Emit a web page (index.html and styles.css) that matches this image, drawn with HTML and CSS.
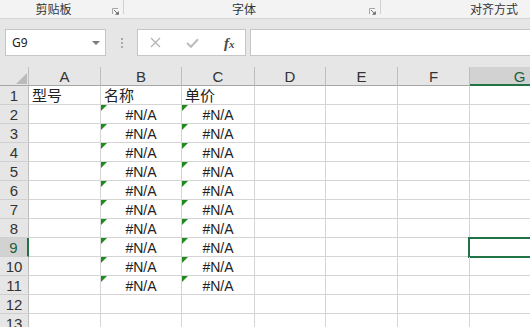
FILE: index.html
```html
<!DOCTYPE html>
<html lang="zh-CN">
<head>
    <meta charset="UTF-8">
    <title>Sheet1</title>
    <link rel="stylesheet" href="styles.css">
</head>
<body>
    <!-- Ribbon group labels -->
    <div class="ribbon">
        <div class="group g-clip">
            <span class="group-label">剪贴板</span>
            <span class="launcher"><svg width="7" height="7" viewBox="0 0 7 7"><path d="M0.5 6V0.5H6" fill="none" stroke="#a6a6a6"/><path d="M2 2L5 5" stroke="#777"/><polygon points="6.8,3 6.8,6.8 3,6.8" fill="#666"/></svg></span>
            <span class="sep"></span>
        </div>
        <div class="group g-font">
            <span class="group-label">字体</span>
            <span class="launcher"><svg width="7" height="7" viewBox="0 0 7 7"><path d="M0.5 6V0.5H6" fill="none" stroke="#a6a6a6"/><path d="M2 2L5 5" stroke="#777"/><polygon points="6.8,3 6.8,6.8 3,6.8" fill="#666"/></svg></span>
            <span class="sep"></span>
        </div>
        <div class="group g-align">
            <span class="group-label">对齐方式</span>
        </div>
    </div>

    <!-- Formula bar -->
    <div class="formula-bar">
        <div class="name-box">
            <span>G9</span>
            <span class="dd"></span>
        </div>
        <div class="grip"><i></i><i></i><i></i></div>
        <div class="fx-buttons">
            <svg width="11" height="11" viewBox="0 0 11 11"><path d="M1 1L10 10M10 1L1 10" stroke="#b3b3b3" stroke-width="1.3"/></svg>
            <svg width="13" height="10" viewBox="0 0 13 10"><path d="M1 5L5 8.8L12 1.2" fill="none" stroke="#bcbcbc" stroke-width="2"/></svg>
            <span class="fx"><i>f</i><i class="x">x</i></span>
        </div>
        <div class="formula-input"></div>
    </div>

    <!-- Worksheet -->
    <div class="sheet">
        <div class="ch corner"></div><div class="ch">A</div><div class="ch">B</div><div class="ch">C</div><div class="ch">D</div><div class="ch">E</div><div class="ch">F</div><div class="ch act">G</div>

        <div class="rh">1</div><div class="c cn">型号</div><div class="c cn">名称</div><div class="c cn">单价</div><div class="c"></div><div class="c"></div><div class="c"></div><div class="c"></div>
        <div class="rh">2</div><div class="c"></div><div class="c err">#N/A</div><div class="c err">#N/A</div><div class="c"></div><div class="c"></div><div class="c"></div><div class="c"></div>
        <div class="rh">3</div><div class="c"></div><div class="c err">#N/A</div><div class="c err">#N/A</div><div class="c"></div><div class="c"></div><div class="c"></div><div class="c"></div>
        <div class="rh">4</div><div class="c"></div><div class="c err">#N/A</div><div class="c err">#N/A</div><div class="c"></div><div class="c"></div><div class="c"></div><div class="c"></div>
        <div class="rh">5</div><div class="c"></div><div class="c err">#N/A</div><div class="c err">#N/A</div><div class="c"></div><div class="c"></div><div class="c"></div><div class="c"></div>
        <div class="rh">6</div><div class="c"></div><div class="c err">#N/A</div><div class="c err">#N/A</div><div class="c"></div><div class="c"></div><div class="c"></div><div class="c"></div>
        <div class="rh">7</div><div class="c"></div><div class="c err">#N/A</div><div class="c err">#N/A</div><div class="c"></div><div class="c"></div><div class="c"></div><div class="c"></div>
        <div class="rh">8</div><div class="c"></div><div class="c err">#N/A</div><div class="c err">#N/A</div><div class="c"></div><div class="c"></div><div class="c"></div><div class="c"></div>
        <div class="rh act">9</div><div class="c"></div><div class="c err">#N/A</div><div class="c err">#N/A</div><div class="c"></div><div class="c"></div><div class="c"></div><div class="c sel"></div>
        <div class="rh">10</div><div class="c"></div><div class="c err">#N/A</div><div class="c err">#N/A</div><div class="c"></div><div class="c"></div><div class="c"></div><div class="c"></div>
        <div class="rh">11</div><div class="c"></div><div class="c err">#N/A</div><div class="c err">#N/A</div><div class="c"></div><div class="c"></div><div class="c"></div><div class="c"></div>
        <div class="rh">12</div><div class="c"></div><div class="c"></div><div class="c"></div><div class="c"></div><div class="c"></div><div class="c"></div><div class="c"></div>
        <div class="rh">13</div><div class="c"></div><div class="c"></div><div class="c"></div><div class="c"></div><div class="c"></div><div class="c"></div><div class="c"></div>
    </div>
</body>
</html>
```

FILE: styles.css
```css
body {
    margin: 0;
    overflow: hidden;
    background: #fff;
    font-family: "Liberation Sans", "Noto Sans CJK SC", sans-serif;
    color: #222;
}

/* ribbon */
.ribbon {
    display: flex;
    height: 18px;
    background: #f3f3f3;
    border-bottom: 1px solid #d5d5d5;
    overflow: hidden;
}
.group {
    display: flex;
    flex: none;
    align-items: flex-start;
    height: 18px;
}
.group-label {
    font: 12px/18px "Noto Sans CJK SC", sans-serif;
    color: #333;
    text-align: center;
}
.g-clip .group-label { width: 107px; }
.g-font .group-label { width: 240px; }
.g-align .group-label { width: 226px; }
.launcher {
    width: 16px;
    padding: 8px 0 0 5px;
    box-sizing: border-box;
    line-height: 0;
}
.sep {
    width: 1px;
    height: 14px;
    background: #d0d0d0;
}

/* formula bar */
.formula-bar {
    display: flex;
    align-items: flex-start;
    height: 48px;
    padding-top: 10px;
    box-sizing: border-box;
    background: #e6e6e6;
}
.name-box {
    margin-left: 5px;
    width: 101px;
    height: 27px;
    box-sizing: border-box;
    border: 1px solid #c6c6c6;
    background: #fff;
    display: flex;
    align-items: center;
    justify-content: space-between;
    padding: 0 5px 0 6px;
    font: 12px "Noto Sans", sans-serif;
    color: #222;
}
.dd {
    border-left: 4px solid transparent;
    border-right: 4px solid transparent;
    border-top: 4px solid #7a7a7a;
}
.grip {
    width: 31px;
    display: flex;
    flex-direction: column;
    align-items: center;
    gap: 2px;
    padding-top: 9px;
}
.grip i {
    width: 2px;
    height: 2px;
    background: #aaa;
}
.fx-buttons {
    width: 109px;
    height: 27px;
    box-sizing: border-box;
    border: 1px solid #c6c6c6;
    background: #fff;
    display: flex;
    align-items: center;
    gap: 25px;
    padding-left: 12px;
}
.fx {
    font-family: "Liberation Serif", serif;
    font-weight: bold;
    color: #4a4a4a;
    line-height: 1;
    width: 11px;
    white-space: nowrap;
}
.fx i { font-size: 15px; }
.fx .x { font-size: 11px; }
.formula-input {
    flex: 1;
    margin-left: 4px;
    height: 27px;
    box-sizing: border-box;
    border: 1px solid #c6c6c6;
    border-right: none;
    background: #fff;
}

/* worksheet */
.sheet {
    display: grid;
    grid-template-columns: 29px 72px 81px 73px 71px 72px 72px 100px;
    grid-auto-rows: 19px;
}
.sheet > div {
    box-sizing: border-box;
    white-space: nowrap;
    position: relative;
}
.ch, .rh {
    background: #e6e6e6;
    color: #333;
    font-size: 15px;
    line-height: 20px;
    text-align: center;
}
.ch {
    border-right: 1px solid #bdbdbd;
    border-bottom: 1px solid #a6a6a6;
}
.rh {
    border-right: 1px solid #bdbdbd;
    border-bottom: 1px solid #cfcfcf;
}
.ch.act {
    background: #d2d2d2;
    color: #1f5e3c;
    border-bottom: 2px solid #217346;
}
.rh.act {
    background: #d2d2d2;
    color: #1f5e3c;
    border-right: 2px solid #217346;
}
.corner::after {
    content: "";
    position: absolute;
    right: 1px;
    bottom: 1px;
    border-left: 11px solid transparent;
    border-bottom: 11px solid #bababa;
}
.c {
    border-right: 1px solid #d4d4d4;
    border-bottom: 1px solid #d4d4d4;
    padding: 0 3px;
    font-size: 14px;
    line-height: 20px;
    color: #222;
}
.cn {
    font-size: 15px;
}
.err {
    text-align: center;
}
.err::before {
    content: "";
    position: absolute;
    left: 0;
    top: 0;
    border-top: 6px solid #1f8a1f;
    border-right: 6px solid transparent;
}
.sel::after {
    content: "";
    position: absolute;
    left: -2px;
    top: -1px;
    right: -2px;
    bottom: -2px;
    border: 2px solid #217346;
}
```
